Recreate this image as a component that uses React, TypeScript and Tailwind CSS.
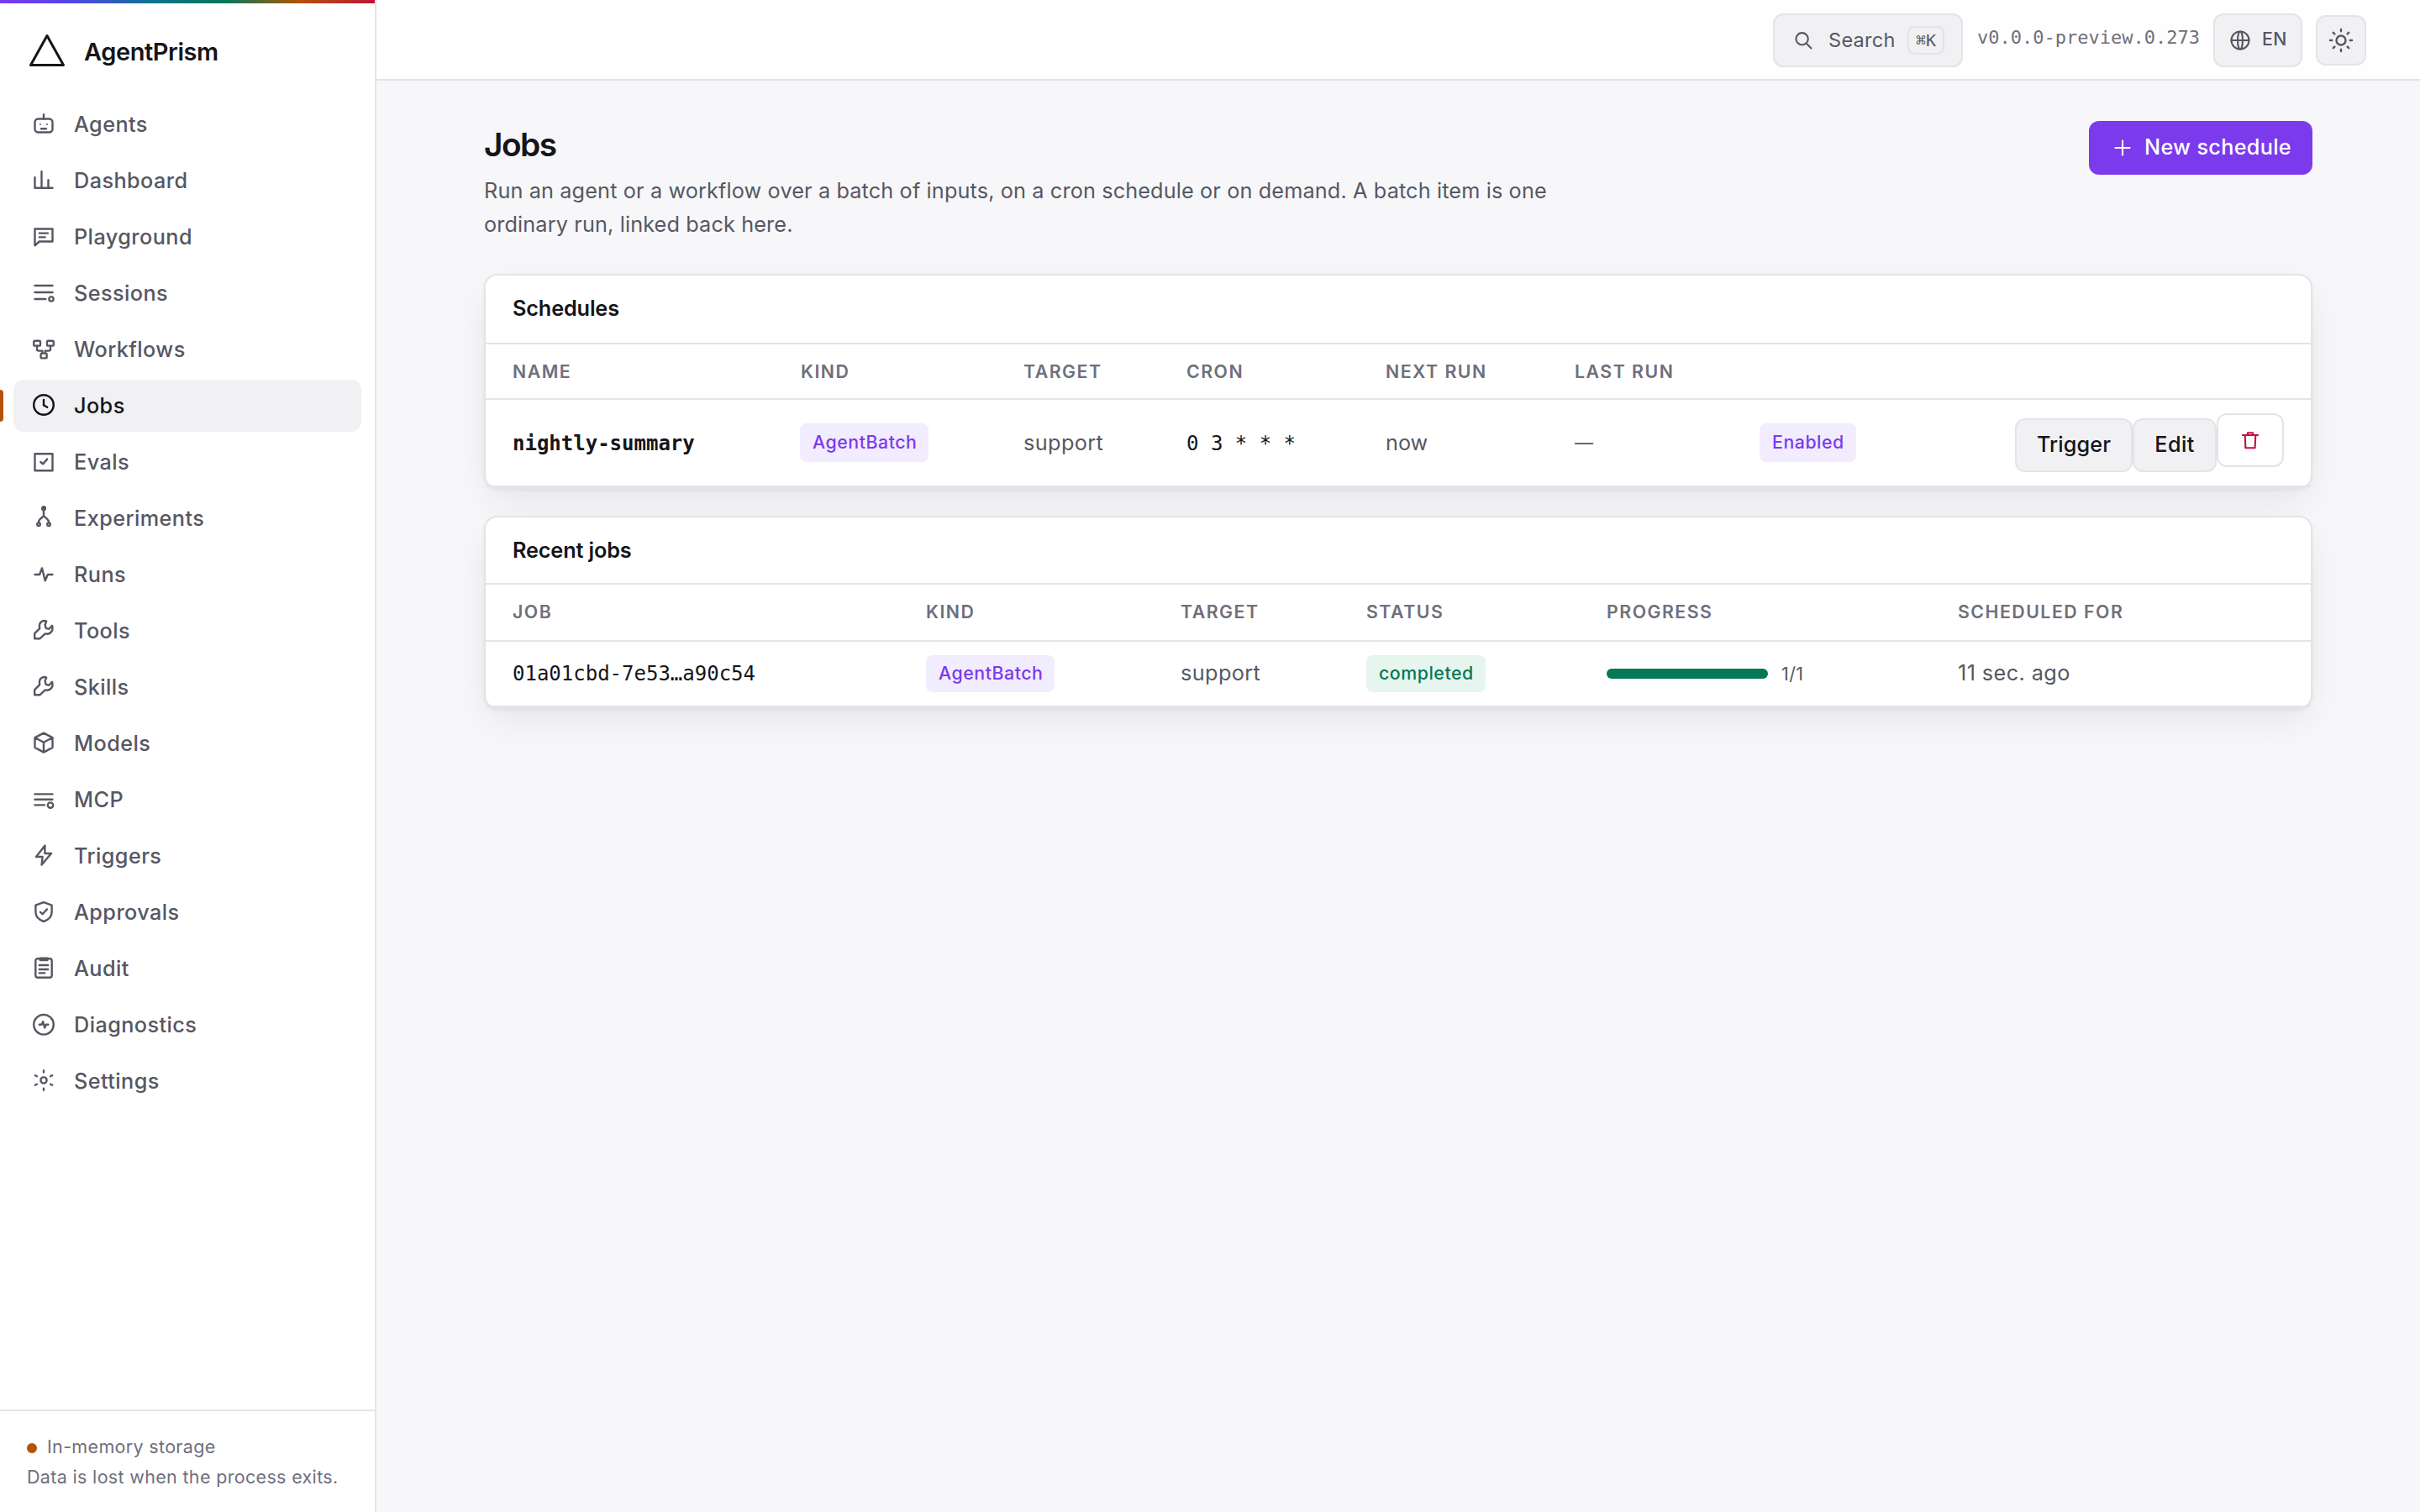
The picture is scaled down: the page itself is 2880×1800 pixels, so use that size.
import type { ReactNode } from 'react';

const WRENCH =
  'M2.6 10.1 5.6 7.1C5.2 5.2 5.6 3.5 7.1 2.8 8 2.4 8.9 2.4 9.6 2.8L8.8 4.9 9.3 6.9 11.2 7.4 13 5.4C13.5 7 13.2 8.5 12.2 9.5 11.2 10.4 10 10.5 8.9 10.2L5.8 13.1H2.6z';

const icons: Record<string, ReactNode> = {
  agents: (
    <>
      <rect x="2.75" y="5.25" width="10.5" height="8" rx="2" />
      <path d="M8 5.25V2.6M6.5 11.1h3" />
      <circle cx="6" cy="8.5" r=".5" fill="currentColor" stroke="none" />
      <circle cx="10" cy="8.5" r=".5" fill="currentColor" stroke="none" />
    </>
  ),
  dashboard: <path d="M2.75 6.6v6.3h10.5M6.75 12.9V3.1M10.75 12.9V8.1" />,
  playground: <path d="M2.75 3.75h10.5v7.5H5.4l-2.65 2.4zM5.4 6.3h5.1M5.4 8.7h3.4" />,
  sessions: (
    <>
      <path d="M2.75 4h10.5M2.75 8h10.5M2.75 12h6.4" />
      <circle cx="12.5" cy="12" r="1.3" />
    </>
  ),
  workflows: (
    <>
      <rect x="2.1" y="3.4" width="3.9" height="2.9" rx=".7" />
      <rect x="10" y="3.4" width="3.9" height="2.9" rx=".7" />
      <rect x="6.3" y="10.8" width="3.5" height="2.9" rx=".5" />
      <path d="M4 6.4v1.9a1 1 0 0 0 1 1h2.2v1.4M12 6.4v1.9a1 1 0 0 1-1 1H8.9v1.4" />
    </>
  ),
  jobs: (
    <>
      <circle cx="8" cy="8" r="5.9" />
      <path d="M8 5v3.2l2.1 1.2" />
    </>
  ),
  evals: <path d="M2.75 3.6h10.5v10H2.75zM6.2 8.5l1.3 1.2 2.6-2.9" />,
  experiments: (
    <>
      <circle cx="8" cy="2.6" r=".95" fill="currentColor" />
      <circle cx="5" cy="12.1" r=".9" />
      <circle cx="11" cy="12.1" r=".9" />
      <path d="M8 3.6v3.5L5.7 9.2Q5 9.9 5 11M8 7.1l2.3 2.1q.7.7.7 1.8" />
    </>
  ),
  runs: <path d="M2.75 8.5h2.8L7 4.7l1.9 7.5 1.5-3.7h2.85" />,
  wrench: <path d={WRENCH} />,
  models: <path d="M8 2.3l5.25 2.75v5.9L8 13.8l-5.25-2.85v-5.9zM2.9 5.1 8 7.9l5.1-2.8M8 7.9v5.9" />,
  mcp: (
    <>
      <path d="M2.75 5.2h10.5M2.75 8.4h10.5M2.75 11.7h5.7" />
      <circle cx="12" cy="11.8" r="1.6" />
    </>
  ),
  triggers: <path d="M8.75 2.3 3.5 9h3.8l-.5 4.8L12.5 7H8.7z" />,
  approvals: (
    <>
      <path d="M8 2.6l4.8 1.7v4.1c0 2.8-1.9 4.6-4.8 5.6-2.9-1-4.8-2.8-4.8-5.6V4.3z" />
      <path d="M6 8.4l1.3 1.2 2.7-2.9" />
    </>
  ),
  audit: (
    <>
      <rect x="3.15" y="2.6" width="9.7" height="11.3" rx="1.3" />
      <path d="M5.9 2.3h4.3v1.2H5.9zM5.4 6.5h5.2M5.4 9h5.2M5.4 11.2h3.2" />
    </>
  ),
  diagnostics: (
    <>
      <circle cx="8" cy="8.4" r="5.9" />
      <path d="M5.4 8.4h1.4l.8-1.8 1 3.6.8-1.8h1.3" />
    </>
  ),
  settings: (
    <>
      <circle cx="8" cy="8" r="1.8" />
      <path d="M8 2.2v1.1M8 12.8v1.1M2.95 5.1l1 .55M13.05 5.1l-1 .55M2.95 10.9l1-.55M13.05 10.9l-1-.55" />
    </>
  ),
  search: (
    <>
      <circle cx="7.2" cy="7" r="4.1" />
      <path d="M10.2 10.2l3.2 3.2" />
    </>
  ),
  globe: (
    <>
      <circle cx="8" cy="8" r="6" />
      <ellipse cx="8" cy="8" rx="1.7" ry="6" />
      <path d="M2 8h12" />
    </>
  ),
  sun: (
    <>
      <circle cx="8" cy="8" r="2.75" />
      <path d="M8 1.5v1.1M8 13.4v1.1M1.5 8h1.1M13.4 8h1.1M3.4 3.4l.8.8M11.8 11.8l.8.8M12.6 3.4l-.8.8M4.2 11.8l-.8.8" />
    </>
  ),
  plus: <path d="M8 3.1v9.8M3.1 8h9.8" />,
  trash: <path d="M2.8 4.6h10.4M6.2 4.4V3h3.6v1.4M4.4 4.7l.4 8.6h6.4l.4-8.6" />,
};

function Icon({ name, className = 'size-7' }: { name: string; className?: string }) {
  return (
    <svg
      viewBox="0 0 16 16"
      fill="none"
      stroke="currentColor"
      strokeWidth="1.2"
      strokeLinecap="round"
      strokeLinejoin="round"
      className={`shrink-0 ${className}`}
    >
      {icons[name]}
    </svg>
  );
}

const navItems = [
  { label: 'Agents', icon: 'agents' },
  { label: 'Dashboard', icon: 'dashboard' },
  { label: 'Playground', icon: 'playground' },
  { label: 'Sessions', icon: 'sessions' },
  { label: 'Workflows', icon: 'workflows' },
  { label: 'Jobs', icon: 'jobs' },
  { label: 'Evals', icon: 'evals' },
  { label: 'Experiments', icon: 'experiments' },
  { label: 'Runs', icon: 'runs' },
  { label: 'Tools', icon: 'wrench' },
  { label: 'Skills', icon: 'wrench' },
  { label: 'Models', icon: 'models' },
  { label: 'MCP', icon: 'mcp' },
  { label: 'Triggers', icon: 'triggers' },
  { label: 'Approvals', icon: 'approvals' },
  { label: 'Audit', icon: 'audit' },
  { label: 'Diagnostics', icon: 'diagnostics' },
  { label: 'Settings', icon: 'settings' },
];

function Sidebar() {
  return (
    <aside className="flex w-[448px] shrink-0 flex-col border-r-2 border-[#e3e3e9] bg-white">
      <div className="h-1 bg-[linear-gradient(90deg,#7c3aed,#4f46e5,#0e7490,#047857,#b45309,#be123c)]" />
      <div className="flex h-[113px] items-center gap-[18px] pl-8">
        <svg viewBox="0 0 48 48" fill="none" stroke="currentColor" strokeWidth="3" strokeLinejoin="round" className="size-12 shrink-0">
          <path d="M24 5.5 43.5 40.4H4.5z" />
        </svg>
        <span className="pl-0.5 pt-[3px] text-[29px] font-semibold tracking-[-0.44px]">AgentPrism</span>
      </div>
      <nav className="flex flex-1 flex-col gap-[5px] px-4">
        {navItems.map(({ label, icon }) => {
          const active = label === 'Jobs';
          return (
            <a
              key={label}
              className={`relative flex h-[62px] items-center gap-5 rounded-xl px-5 text-[25.25px] font-[470] tracking-[0.42px] ${active ? 'bg-[#f1f1f4] text-[#15151a]' : 'text-[#575762]'}`}
            >
              {active && <span className="absolute -left-4 top-3 h-[38px] w-1 rounded-r-sm bg-[#b45309]" />}
              <Icon name={icon} className="-mt-0.5 size-8" />
              <span className="pt-0.5">{label}</span>
            </a>
          );
        })}
      </nav>
      <div className="border-t-2 border-[#e3e3e9] px-8 py-6 text-[21.5px] leading-9 tracking-[0.33px] text-[#6f6f7c]">
        <div className="flex items-center gap-3">
          <span className="mt-1 size-3 rounded-full bg-[#b45309]" />
          In-memory storage
        </div>
        <div>Data is lost when the process exits.</div>
      </div>
    </aside>
  );
}

function Topbar() {
  const button = 'flex items-center rounded-xl border-2 border-[#e3e3e9] bg-[#f1f1f4] text-[#575762]';
  return (
    <header className="flex h-24 shrink-0 items-center justify-end gap-4 border-b-2 border-[#e3e3e9] bg-[#fefefe] pr-16 pt-0.5">
      <button className={`${button} h-16 w-[226px] gap-4 pl-5`}>
        <Icon name="search" />
        <span className="w-[78px] text-[23.5px] tracking-[0.3px]">Search</span>
        <kbd className="flex h-[34px] w-11 items-center justify-center rounded-lg border-2 border-[#e3e3e9] font-['DejaVu_Sans_Mono',monospace] text-[20px] leading-none">
          ⌘K
        </kbd>
      </button>
      <span className="-mt-[7px] w-[266px] pl-px font-['DejaVu_Sans_Mono',monospace] text-[22px] text-[#6f6f7c]">
        v0.0.0-preview.0.273
      </span>
      <button className={`${button} h-16 w-[106px] gap-3 pl-4 text-[21.3px] font-[470] tracking-[0.5px]`}>
        <Icon name="globe" />
        <span className="-mt-0.5">EN</span>
      </button>
      <button className={`${button} size-[60px] justify-center`}>
        <Icon name="sun" className="size-8" />
      </button>
    </header>
  );
}

function Badge({ children, tone = 'violet', className = 'h-[46px]' }: { children: ReactNode; tone?: 'violet' | 'green'; className?: string }) {
  const colors = tone === 'green' ? 'bg-[#e6f5ee] text-[#047857]' : 'bg-[#f1ecfe] text-[#7c3aed]';
  return (
    <span className={`inline-flex items-center rounded-lg pl-[15px] pr-3.5 text-[21.3px] font-[470] leading-none tracking-[0.55px] ${colors} ${className}`}>
      {children}
    </span>
  );
}

const CARD =
  'rounded-2xl border-2 border-[#e3e3e9] bg-white shadow-[0_2px_4px_rgba(21,21,26,0.05),0_16px_48px_-8px_rgba(21,21,26,0.09)]';
const HEAD = 'border-b-2 border-[#e3e3e9] text-[21.3px] font-semibold uppercase tracking-[1.5px] text-[#6f6f7c]';
const MONO = "font-['DejaVu_Sans_Mono',monospace] text-[24px] tracking-normal text-[#15151a]";

function Schedules() {
  const cols = 'grid grid-cols-[343px_265px_194px_237px_225px_220px_1fr] items-center pl-8';
  const action = 'flex h-16 items-center justify-center rounded-xl border-2 border-[#e3e3e9]';
  return (
    <section className={CARD}>
      <h2 className="h-[82px] border-b-2 border-[#e3e3e9] px-8 text-[25.25px] font-semibold leading-[79px] tracking-[-0.14px]">
        Schedules
      </h2>
      <div className={`${cols} ${HEAD} h-[66px] pt-0.5`}>
        <span>Name</span>
        <span>Kind</span>
        <span>Target</span>
        <span>Cron</span>
        <span>Next run</span>
        <span>Last run</span>
      </div>
      <div className={`${cols} h-[104px] border-b-2 border-[#e3e3e9] text-[25.25px] tracking-[0.4px] text-[#575762]`}>
        <span className={`${MONO} pt-0.5 font-bold`}>nightly-summary</span>
        <span className="-ml-px flex">
          <Badge>AgentBatch</Badge>
        </span>
        <span className="pt-0.5">support</span>
        <span className={`${MONO} pt-0.5`}>0 3 * * *</span>
        <span className="pt-0.5 tracking-normal">now</span>
        <span className="text-[22px] tracking-normal">—</span>
        <span className="flex items-center justify-between pr-8">
          <Badge>Enabled</Badge>
          <span className="flex font-[470] text-[#15151a]">
            <button className={`${action} mt-1.5 w-[140px] bg-[#f1f1f4] tracking-[0.1px]`}>Trigger</button>
            <button className={`${action} mt-1.5 w-[100px] bg-[#f1f1f4]`}>Edit</button>
            <button className={`${action} w-20 text-[#be123c]`}>
              <Icon name="trash" />
            </button>
          </span>
        </span>
      </div>
    </section>
  );
}

function RecentJobs() {
  const cols = 'grid grid-cols-[492px_303px_221px_286px_418px_1fr] items-center pl-8';
  return (
    <section className={CARD}>
      <h2 className="h-20 border-b-2 border-[#e3e3e9] px-8 text-[25.25px] font-semibold leading-[78px] tracking-[-0.14px]">
        Recent jobs
      </h2>
      <div className={`${cols} ${HEAD} h-[68px]`}>
        <span>Job</span>
        <span>Kind</span>
        <span>Target</span>
        <span>Status</span>
        <span>Progress</span>
        <span>Scheduled for</span>
      </div>
      <div className={`${cols} h-[78px] border-b-2 border-[#e3e3e9] text-[25.25px] tracking-[0.4px] text-[#575762]`}>
        <span className={MONO}>01a01cbd-7e53…a90c54</span>
        <span className="flex">
          <Badge className="h-11">AgentBatch</Badge>
        </span>
        <span className="-mt-px">support</span>
        <span className="flex">
          <Badge tone="green" className="h-11">completed</Badge>
        </span>
        <span className="flex items-center gap-4">
          <span className="h-3 w-48 rounded-full bg-[#047857]" />
          <span className="text-[21.5px]">1/1</span>
        </span>
        <span className="-mt-px">11 sec. ago</span>
      </div>
    </section>
  );
}

export default function App() {
  return (
    <div className="flex h-[1800px] w-[2880px] overflow-hidden bg-[#f7f7f9] font-['Inter',sans-serif] text-[#15151a]">
      <Sidebar />
      <div className="flex min-w-0 flex-1 flex-col">
        <Topbar />
        <main className="mx-auto w-[2176px] pt-12">
          <div className="mb-[39px] flex items-start justify-between">
            <div>
              <h1 className="text-[38.8px] font-semibold leading-[55px] tracking-[-1.5px]">Jobs</h1>
              <p className="mt-2 w-[1300px] text-[25.25px] leading-10 tracking-[0.13px] text-[#575762]">
                Run an agent or a workflow over a batch of inputs, on a cron schedule or on demand. A batch item is one
                ordinary run, linked back here.
              </p>
            </div>
            <button className="flex h-16 w-[266px] items-center gap-3 rounded-xl bg-[#7c3aed] pl-[26px] text-[25.25px] font-[470] tracking-[0.3px] text-white">
              <Icon name="plus" />
              New schedule
            </button>
          </div>
          <div className="flex flex-col gap-8">
            <Schedules />
            <RecentJobs />
          </div>
        </main>
      </div>
    </div>
  );
}
